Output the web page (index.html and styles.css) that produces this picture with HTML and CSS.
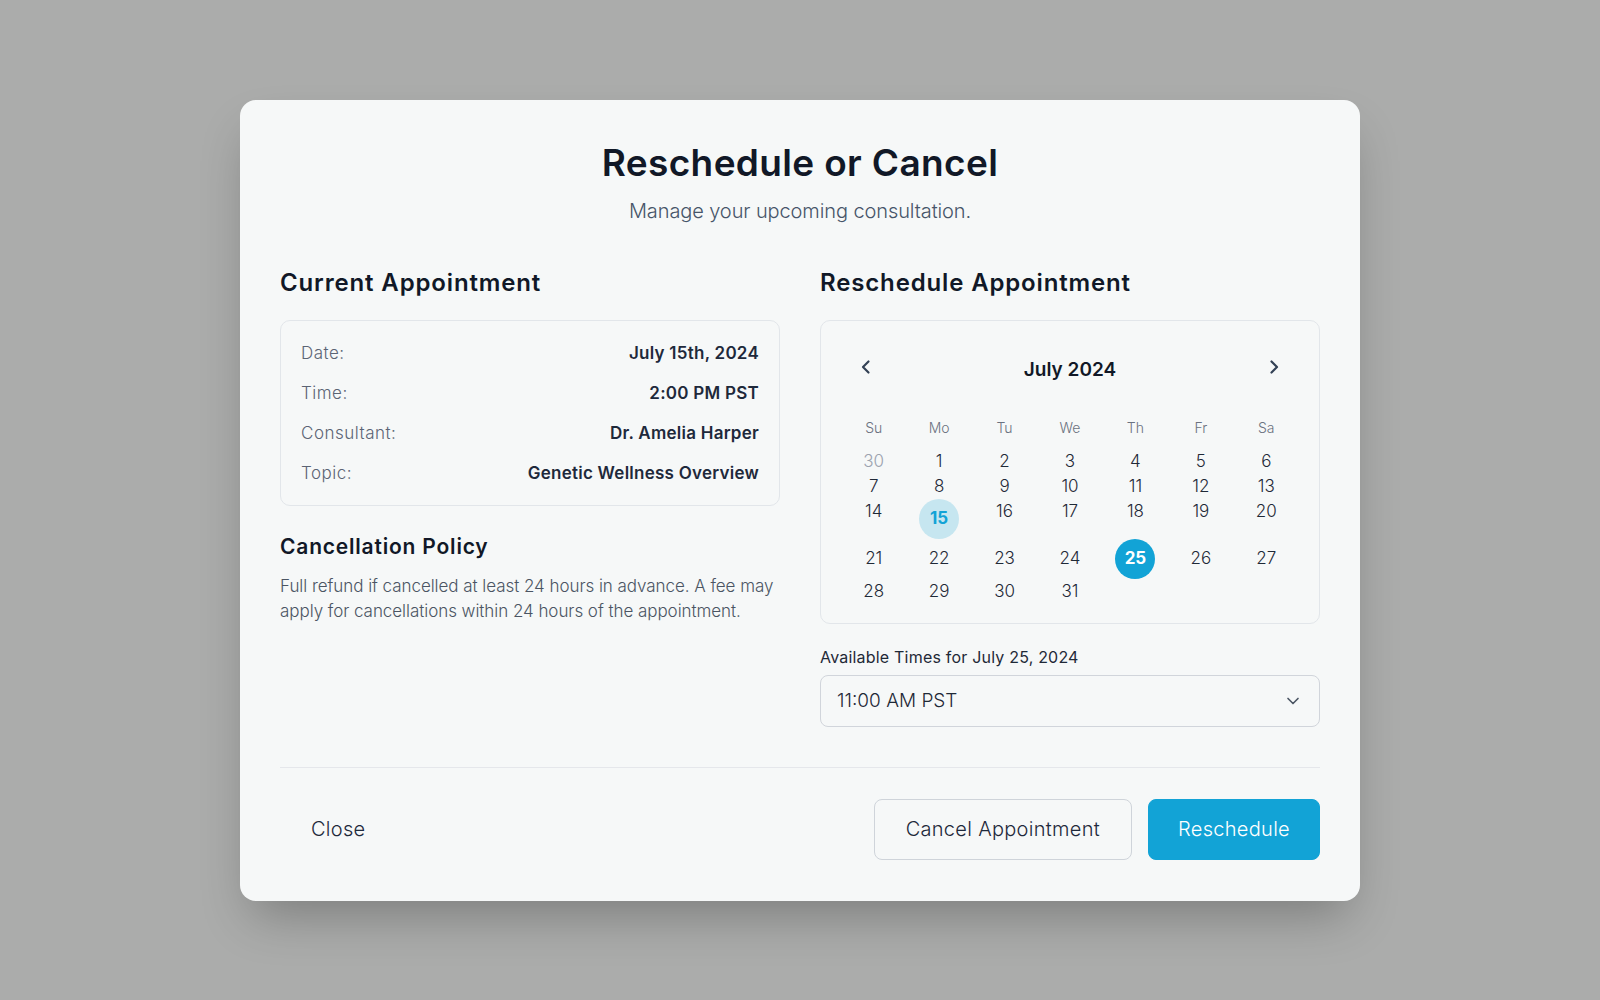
FILE: index.html
```html
<!DOCTYPE html>
<html lang="en">
<head>
<meta charset="utf-8">
<title>Reschedule or Cancel</title>
<link rel="stylesheet" href="styles.css">
</head>
<body>
<div class="overlay">
  <div class="modal">
    <header class="modal-head">
      <h1 class="title">Reschedule or Cancel</h1>
      <p class="subtitle">Manage your upcoming consultation.</p>
    </header>

    <div class="columns">
      <section class="col">
        <h2 class="section-title">Current Appointment</h2>
        <div class="info-card">
          <div class="info-row"><span class="info-label">Date:</span><span class="info-value">July 15th, 2024</span></div>
          <div class="info-row"><span class="info-label">Time:</span><span class="info-value">2:00 PM PST</span></div>
          <div class="info-row"><span class="info-label">Consultant:</span><span class="info-value">Dr. Amelia Harper</span></div>
          <div class="info-row"><span class="info-label">Topic:</span><span class="info-value">Genetic Wellness Overview</span></div>
        </div>
        <h3 class="policy-title">Cancellation Policy</h3>
        <p class="policy-text">Full refund if cancelled at least 24 hours in advance. A fee may apply for cancellations within 24 hours of the appointment.</p>
      </section>

      <section class="col">
        <h2 class="section-title">Reschedule Appointment</h2>
        <div class="calendar">
          <div class="cal-nav">
            <button class="nav-btn" aria-label="Previous month">
              <svg width="24" height="24" viewBox="0 0 24 24" fill="none" stroke="currentColor" stroke-width="2.2" stroke-linecap="round" stroke-linejoin="round"><path d="M14.5 17.5L9 12l5.5-5.5"/></svg>
            </button>
            <div class="cal-month">July 2024</div>
            <button class="nav-btn" aria-label="Next month">
              <svg width="24" height="24" viewBox="0 0 24 24" fill="none" stroke="currentColor" stroke-width="2.2" stroke-linecap="round" stroke-linejoin="round"><path d="M9.5 17.5L15 12 9.5 6.5"/></svg>
            </button>
          </div>
          <div class="week dow">
            <span>Su</span><span>Mo</span><span>Tu</span><span>We</span><span>Th</span><span>Fr</span><span>Sa</span>
          </div>
          <div class="days">
            <div class="week">
              <span class="day muted">30</span><span class="day">1</span><span class="day">2</span><span class="day">3</span><span class="day">4</span><span class="day">5</span><span class="day">6</span>
            </div>
            <div class="week">
              <span class="day">7</span><span class="day">8</span><span class="day">9</span><span class="day">10</span><span class="day">11</span><span class="day">12</span><span class="day">13</span>
            </div>
            <div class="week">
              <span class="day">14</span><span class="day"><span class="dot today">15</span></span><span class="day">16</span><span class="day">17</span><span class="day">18</span><span class="day">19</span><span class="day">20</span>
            </div>
            <div class="week week-mid">
              <span class="day">21</span><span class="day">22</span><span class="day">23</span><span class="day">24</span><span class="day"><span class="dot selected">25</span></span><span class="day">26</span><span class="day">27</span>
            </div>
            <div class="week">
              <span class="day">28</span><span class="day">29</span><span class="day">30</span><span class="day">31</span><span class="day"></span><span class="day"></span><span class="day"></span>
            </div>
          </div>
        </div>
        <label class="field-label">Available Times for July 25, 2024</label>
        <div class="select">
          <span>11:00 AM PST</span>
          <svg width="20" height="20" viewBox="0 0 24 24" fill="none" stroke="currentColor" stroke-width="2" stroke-linecap="round" stroke-linejoin="round"><path d="M6 9l6 6 6-6"/></svg>
        </div>
      </section>
    </div>

    <footer class="modal-foot">
      <button class="btn btn-ghost">Close</button>
      <div class="foot-actions">
        <button class="btn btn-outline">Cancel Appointment</button>
        <button class="btn btn-primary">Reschedule</button>
      </div>
    </footer>
  </div>
</div>
</body>
</html>
```

FILE: styles.css
```css
* { box-sizing: border-box; }

html, body {
  margin: 0;
  padding: 0;
  height: 100%;
}

body {
  background: #abacab;
  font-family: Inter, "Noto Sans", "Liberation Sans", sans-serif;
  color: #0f172a;
}

.overlay {
  min-height: 100vh;
  display: flex;
  align-items: center;
  justify-content: center;
}

.modal {
  width: 1120px;
  background: #f6f8f8;
  border-radius: 16px;
  padding: 41px 40px 41px;
  box-shadow: 0 25px 50px -12px rgba(0, 0, 0, 0.28);
}

.modal-head {
  text-align: center;
  margin-bottom: 42px;
}

.title {
  margin: 0;
  font-size: 37px;
  line-height: 44px;
  font-weight: 600;
  color: #111827;
  letter-spacing: 0.35px;
}

.subtitle {
  margin: 12px 0 0;
  font-size: 20px;
  line-height: 28px;
  font-weight: 300;
  color: #475569;
  letter-spacing: -0.1px;
}

.columns {
  display: grid;
  grid-template-columns: 1fr 1fr;
  column-gap: 40px;
}

.section-title {
  margin: 0 0 21px;
  font-size: 24px;
  line-height: 32px;
  font-weight: 600;
  color: #111827;
  letter-spacing: 0.85px;
}

.info-card {
  border: 1px solid #e2e6ea;
  border-radius: 10px;
  padding: 20px;
  display: flex;
  flex-direction: column;
  gap: 16px;
}

.info-row {
  display: flex;
  justify-content: space-between;
  font-size: 17px;
  line-height: 24px;
}

.info-label {
  color: #5b6474;
  font-weight: 300;
  letter-spacing: 0.5px;
}

.info-value {
  color: #1e293b;
  font-weight: 600;
  letter-spacing: 0.25px;
}

.policy-title {
  margin: 27px 0 13px;
  font-size: 21px;
  line-height: 28px;
  font-weight: 600;
  color: #111827;
  letter-spacing: 0.8px;
}

.policy-text {
  margin: 0;
  font-size: 17px;
  line-height: 25px;
  font-weight: 300;
  color: #4b5563;
  letter-spacing: -0.05px;
}

.calendar {
  border: 1px solid #e2e6ea;
  border-radius: 10px;
  padding: 20px 20px 19px;
}

.cal-nav {
  display: flex;
  align-items: center;
  justify-content: space-between;
  height: 48px;
  margin-bottom: 29px;
}

.nav-btn {
  width: 40px;
  height: 40px;
  margin: 4px 5px 0;
  border: 0;
  background: transparent;
  color: #334155;
  display: flex;
  align-items: center;
  justify-content: center;
  padding: 0;
}

.cal-month {
  font-size: 19px;
  font-weight: 600;
  color: #111827;
  padding-top: 10px;
}

.week {
  display: grid;
  grid-template-columns: repeat(7, 1fr);
  align-items: start;
  text-align: center;
}

.week-mid {
  align-items: center;
}

.dow {
  font-size: 14px;
  line-height: 20px;
  color: #6b7280;
  font-weight: 300;
  margin-bottom: 11px;
}

.day {
  font-size: 17px;
  line-height: 25px;
  color: #1f2937;
  font-weight: 300;
}

.day.muted {
  color: #9ca3af;
}

.dot {
  width: 40px;
  height: 40px;
  margin: 0 auto;
  border-radius: 50%;
  display: flex;
  align-items: center;
  justify-content: center;
  font-weight: 700;
}

.dot.today {
  background: #c6e6f0;
  color: #12a3d6;
}

.dot.selected {
  background: #12a3d6;
  color: #ffffff;
}

.field-label {
  display: block;
  margin-top: 21px;
  font-size: 16px;
  line-height: 24px;
  font-weight: 400;
  color: #1f2937;
  letter-spacing: 0.2px;
}

.select {
  margin-top: 6px;
  height: 52px;
  border: 1px solid #d1d5db;
  border-radius: 8px;
  padding: 0 16px;
  display: flex;
  align-items: center;
  justify-content: space-between;
  font-size: 19px;
  font-weight: 300;
  color: #1f2937;
}

.select svg {
  color: #4b5563;
}

.modal-foot {
  margin-top: 40px;
  border-top: 1px solid #e5e7eb;
  padding-top: 31px;
  display: flex;
  align-items: center;
  justify-content: space-between;
}

.foot-actions {
  display: flex;
  gap: 16px;
}

.btn {
  height: 61px;
  padding: 0 30px;
  border-radius: 8px;
  font-family: inherit;
  font-size: 20px;
  font-weight: 300;
  letter-spacing: 0.3px;
  cursor: pointer;
}

.btn-ghost {
  border: 1px solid transparent;
  background: transparent;
  color: #1e293b;
}

.btn-outline {
  border: 1px solid #cfd4da;
  background: transparent;
  color: #1e293b;
  padding: 0 31px;
}

.btn-primary {
  border: 1px solid #12a3d6;
  background: #12a3d6;
  color: #ffffff;
  padding: 0 29px;
}
```
